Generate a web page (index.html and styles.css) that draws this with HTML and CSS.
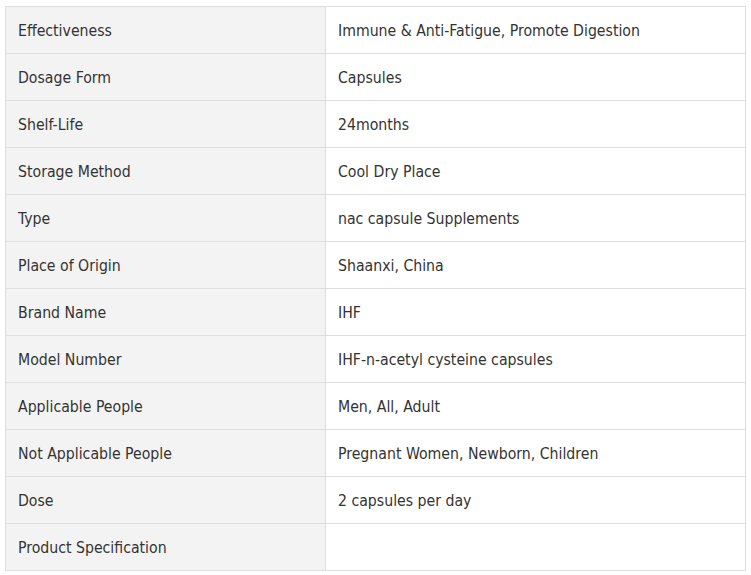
FILE: index.html
```html
<!DOCTYPE html>
<html>
<head>
<meta charset="utf-8">
<link rel="stylesheet" href="styles.css">
</head>
<body>
<table class="spec">
<tr><td class="k">Effectiveness</td><td class="v">Immune &amp; Anti-Fatigue, Promote Digestion</td></tr>
<tr><td class="k">Dosage Form</td><td class="v">Capsules</td></tr>
<tr><td class="k">Shelf-Life</td><td class="v">24months</td></tr>
<tr><td class="k">Storage Method</td><td class="v">Cool Dry Place</td></tr>
<tr><td class="k">Type</td><td class="v">nac capsule Supplements</td></tr>
<tr><td class="k">Place of Origin</td><td class="v">Shaanxi, China</td></tr>
<tr><td class="k">Brand Name</td><td class="v">IHF</td></tr>
<tr><td class="k">Model Number</td><td class="v">IHF-n-acetyl cysteine capsules</td></tr>
<tr><td class="k">Applicable People</td><td class="v">Men, All, Adult</td></tr>
<tr><td class="k">Not Applicable People</td><td class="v">Pregnant Women, Newborn, Children</td></tr>
<tr><td class="k">Dose</td><td class="v">2 capsules per day</td></tr>
<tr><td class="k">Product Specification</td><td class="v"></td></tr>
</table>
</body>
</html>
```
FILE: styles.css
```css
body {
  margin: 0;
  padding: 6px 5px;
  background: #fff;
  font-family: "DejaVu Sans Condensed", "DejaVu Sans", sans-serif;
  font-stretch: condensed;
  font-size: 15.7px;
  color: #333;
}
.spec {
  border-collapse: collapse;
  width: 741px;
  table-layout: fixed;
}
.spec td {
  border: 1px solid #dedede;
  height: 46px;
  box-sizing: border-box;
  padding: 0 12px;
  vertical-align: middle;
}
.spec tr { height: 47px; }
.spec .k {
  width: 320px;
  background: #f3f3f3;
}
.spec .v {
  background: #fff;
}
```
